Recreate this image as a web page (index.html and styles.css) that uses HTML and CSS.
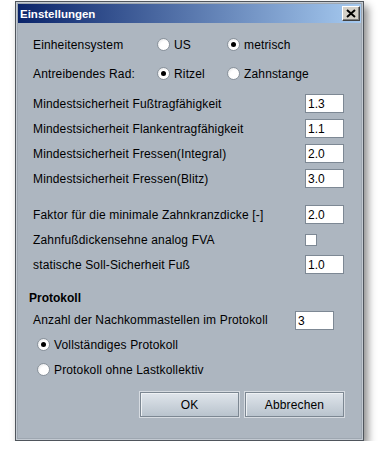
FILE: index.html
```html
<!DOCTYPE html>
<html lang="de">
<head>
	<meta charset="UTF-8">
	<title>Einstellungen</title>
	<link rel="stylesheet" href="styles.css">
</head>
<body>
	<div class="dialog">
		<div class="titlebar">
			<span class="title">Einstellungen</span>
			<span class="close">
				<svg width="10" height="9" viewBox="0 0 10 9"><path d="M1 1 L9 8 M9 1 L1 8" stroke="#000" stroke-width="2"/></svg>
			</span>
		</div>
		<div class="content">
			<div class="row tall radios">
				<span class="label">Einheitensystem</span>
				<span class="opt"><i class="radio"></i>US</span>
				<span class="opt"><i class="radio on"></i>metrisch</span>
			</div>
			<div class="row tall radios">
				<span class="label">Antreibendes Rad:</span>
				<span class="opt"><i class="radio on"></i>Ritzel</span>
				<span class="opt"><i class="radio"></i>Zahnstange</span>
			</div>

			<div class="group first">
				<div class="row field"><span class="label">Mindestsicherheit Fußtragfähigkeit</span><span class="input">1.3</span></div>
				<div class="row field"><span class="label">Mindestsicherheit Flankentragfähigkeit</span><span class="input">1.1</span></div>
				<div class="row field"><span class="label">Mindestsicherheit Fressen(Integral)</span><span class="input">2.0</span></div>
				<div class="row field"><span class="label">Mindestsicherheit Fressen(Blitz)</span><span class="input">3.0</span></div>
			</div>

			<div class="group second">
				<div class="row field"><span class="label">Faktor für die minimale Zahnkranzdicke [-]</span><span class="input">2.0</span></div>
				<div class="row field"><span class="label">Zahnfußdickensehne analog FVA</span><span class="checkbox"></span></div>
				<div class="row field"><span class="label">statische Soll-Sicherheit Fuß</span><span class="input">1.0</span></div>
			</div>

			<div class="protokoll">
				<div class="heading">Protokoll</div>
				<div class="row anzahl"><span class="label">Anzahl der Nachkommastellen im Protokoll</span><span class="input">3</span></div>
				<div class="row choice"><span class="opt"><i class="radio on"></i>Vollständiges Protokoll</span></div>
				<div class="row choice"><span class="opt"><i class="radio"></i>Protokoll ohne Lastkollektiv</span></div>
			</div>

			<div class="buttons">
				<span class="button">OK</span>
				<span class="button">Abbrechen</span>
			</div>
		</div>
	</div>
</body>
</html>
```

FILE: styles.css
```css
*{padding: 0; margin: 0; box-sizing: border-box;}
body{background: #fff; padding: 1px 0 0 15px; font: 12px "Liberation Sans", Arial, sans-serif; color: #000;}

.dialog{
	width: 349px; background: #adb6c0;
	border: 1px solid #4f555c;
	box-shadow: inset 0 0 0 1px #c3cad2, inset 0 0 0 2px #9ea7b1, 4px 5px 8px rgba(0,0,0,.45);
	padding: 2px;
}
.titlebar{
	height: 19px; display: flex; align-items: center; justify-content: space-between;
	background: linear-gradient(to right, #0a246a, #a6caf0);
	padding: 0 1px;
}
.title{color: #fff; font-weight: bold; font-size: 11.5px; padding-left: 1px;}
.close{
	width: 18px; height: 15px; display: flex; align-items: center; justify-content: center;
	background: #d4d0c8;
	border-top: 1px solid #fff; border-left: 1px solid #fff;
	border-right: 1px solid #404040; border-bottom: 1px solid #404040;
	box-shadow: inset -1px -1px 0 #808080;
}

.content{padding: 7px 17px 21px 15px; letter-spacing: .15px;}
.row{display: flex; align-items: center;}
.row.tall{height: 29px;}
.radios .label{width: 124px; flex-shrink: 0;}
.radios .opt{width: 70px; flex-shrink: 0;}
.opt{display: flex; align-items: center;}
.radio{
	display: inline-block; flex-shrink: 0; width: 13px; height: 13px; border-radius: 50%; margin-right: 4px;
	border: 1px solid #8a939c;
	background: radial-gradient(circle at 62% 62%, #fff 45%, #d8dadd 100%);
	position: relative;
}
.radio.on::after{
	content: ""; position: absolute; left: 3px; top: 3px; width: 5px; height: 5px;
	border-radius: 50%; background: #000;
}

.group.first{margin-top: 3px;}
.group.second{margin-top: 11px;}
.field{height: 25px; justify-content: space-between;}
.input{
	width: 39px; height: 19px; background: #fff; border: 1px solid #7d8894; flex-shrink: 0;
	padding: 2px 0 0 2px; line-height: 14px; letter-spacing: 0;
}
.checkbox{
	width: 12px; height: 12px; background: #fff; border: 1px solid #7d8894; margin-right: 27px;
}

.protokoll{margin-top: 11px;}
.heading{font-weight: bold; height: 20px; line-height: 20px; margin-left: -4px; letter-spacing: 0;}
.anzahl{height: 24px; justify-content: space-between; padding-right: 10px;}
.choice{height: 25px; padding-left: 4px;}
.protokoll .choice:first-of-type{margin-top: 1px;}

.buttons{display: flex; justify-content: flex-end; gap: 6px; margin-top: 10px;}
.button{
	width: 99px; height: 25px; display: flex; align-items: center; justify-content: center;
	border: 1px solid #7c8792;
	box-shadow: inset 1px 1px 0 #eef1f4, 0 0 0 1px #d6dbe1;
	background: linear-gradient(#dfe5eb, #b9c3cd);
}
```
